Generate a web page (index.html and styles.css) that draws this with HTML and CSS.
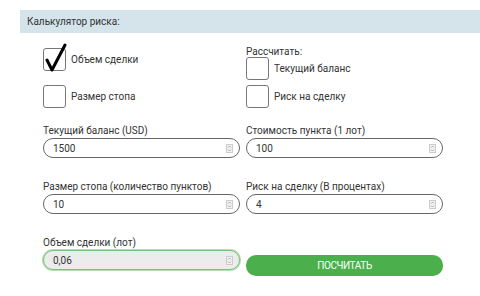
FILE: index.html
```html
<!DOCTYPE html>
<html lang="ru">
<head>
<meta charset="utf-8">
<link rel="stylesheet" href="styles.css">
</head>
<body>
<div class="header">Калькулятор риска:</div>
<div class="opts">
  <div class="col">
    <div class="chk-row first"><span class="box"><svg class="tick" width="24" height="30" viewBox="0 0 24 30"><path d="M3 17 L8 27 L21 2" fill="none" stroke="#000" stroke-width="3" stroke-linecap="round" stroke-linejoin="round"/></svg></span><span>Объем сделки</span></div>
    <div class="chk-row"><span class="box"></span><span>Размер стопа</span></div>
  </div>
  <div class="col">
    <div class="calc-title">Рассчитать:</div>
    <div class="chk-row"><span class="box"></span><span>Текущий баланс</span></div>
    <div class="chk-row"><span class="box"></span><span>Риск на сделку</span></div>
  </div>
</div>
<div class="fields">
  <div class="field"><div class="lbl">Текущий баланс (USD)</div><div class="inp"><span>1500</span><svg class="spin" width="7" height="9" viewBox="0 0 7 9"><rect x="0.5" y="0.5" width="6" height="8" fill="#f2f2f2" stroke="#ccc"/><path d="M2 3.5 L3.5 2 L5 3.5 M2 5.5 L3.5 7 L5 5.5" fill="none" stroke="#999" stroke-width="0.8"/></svg></div></div>
  <div class="field"><div class="lbl">Стоимость пункта (1 лот)</div><div class="inp"><span>100</span><svg class="spin" width="7" height="9" viewBox="0 0 7 9"><rect x="0.5" y="0.5" width="6" height="8" fill="#f2f2f2" stroke="#ccc"/><path d="M2 3.5 L3.5 2 L5 3.5 M2 5.5 L3.5 7 L5 5.5" fill="none" stroke="#999" stroke-width="0.8"/></svg></div></div>
  <div class="field"><div class="lbl">Размер стопа (количество пунктов)</div><div class="inp"><span>10</span><svg class="spin" width="7" height="9" viewBox="0 0 7 9"><rect x="0.5" y="0.5" width="6" height="8" fill="#f2f2f2" stroke="#ccc"/><path d="M2 3.5 L3.5 2 L5 3.5 M2 5.5 L3.5 7 L5 5.5" fill="none" stroke="#999" stroke-width="0.8"/></svg></div></div>
  <div class="field"><div class="lbl">Риск на сделку (В процентах)</div><div class="inp"><span>4</span><svg class="spin" width="7" height="9" viewBox="0 0 7 9"><rect x="0.5" y="0.5" width="6" height="8" fill="#f2f2f2" stroke="#ccc"/><path d="M2 3.5 L3.5 2 L5 3.5 M2 5.5 L3.5 7 L5 5.5" fill="none" stroke="#999" stroke-width="0.8"/></svg></div></div>
  <div class="field"><div class="lbl">Объем сделки (лот)</div><div class="inp result"><span>0,06</span><svg class="spin" width="7" height="9" viewBox="0 0 7 9"><rect x="0.5" y="0.5" width="6" height="8" fill="#f2f2f2" stroke="#ccc"/><path d="M2 3.5 L3.5 2 L5 3.5 M2 5.5 L3.5 7 L5 5.5" fill="none" stroke="#999" stroke-width="0.8"/></svg></div></div>
  <div class="field"><div class="btn">ПОСЧИТАТЬ</div></div>
</div>
</body>
</html>
```
FILE: styles.css
```css
* { box-sizing: border-box; }
html, body { margin: 0; padding: 0; background: #fff; }
body {
  width: 480px;
  height: 296px;
  overflow: hidden;
  font-family: Roboto, "Liberation Sans", sans-serif;
  font-size: 10px;
  color: #333;
}
.header {
  margin: 10px 0 0 20px;
  height: 23px;
  background: #d5e3eb;
  padding-left: 7px;
  display: flex;
  align-items: center;
  font-size: 10px;
  color: #333;
}
.opts {
  display: grid;
  grid-template-columns: 197px 197px;
  column-gap: 6px;
  padding-left: 43px;
  margin-top: 14px;
}
.col { display: flex; flex-direction: column; gap: 5px; }
.chk-row {
  display: flex;
  align-items: center;
  gap: 5px;
  height: 23px;
}
.col:first-child .chk-row.first { margin-top: 1px; margin-bottom: 9px; }
.calc-title { height: 10px; line-height: 10px; margin-top: 0; margin-bottom: -5px; }
.box {
  position: relative;
  width: 23px;
  height: 23px;
  border: 1px solid #777;
  border-radius: 3px;
  flex: none;
}
.tick { position: absolute; left: 0; top: -6px; }
.fields {
  display: grid;
  grid-template-columns: 197px 197px;
  column-gap: 6px;
  row-gap: 23px;
  padding-left: 43px;
  margin-top: 17px;
}
.lbl { height: 12px; line-height: 12px; margin-bottom: 1px; color: #333; }
.inp {
  height: 20px;
  border: 1px solid #666;
  border-radius: 10px;
  display: flex;
  align-items: center;
  justify-content: space-between;
  padding: 0 6px 0 9px;
  color: #333;
}
.inp.result {
  background: #ececec;
  border: 1px solid #79c279;
  box-shadow: 0 0 0 1px #b6deb6;
}
.spin { flex: none; }
.btn {
  margin-top: 18px;
  height: 21px;
  border-radius: 10px;
  background: #4bb04b;
  color: #fff;
  font-family: Roboto, "Liberation Sans", sans-serif;
  font-size: 10px;
  letter-spacing: -0.4px;
  display: flex;
  align-items: center;
  justify-content: center;
}
```
